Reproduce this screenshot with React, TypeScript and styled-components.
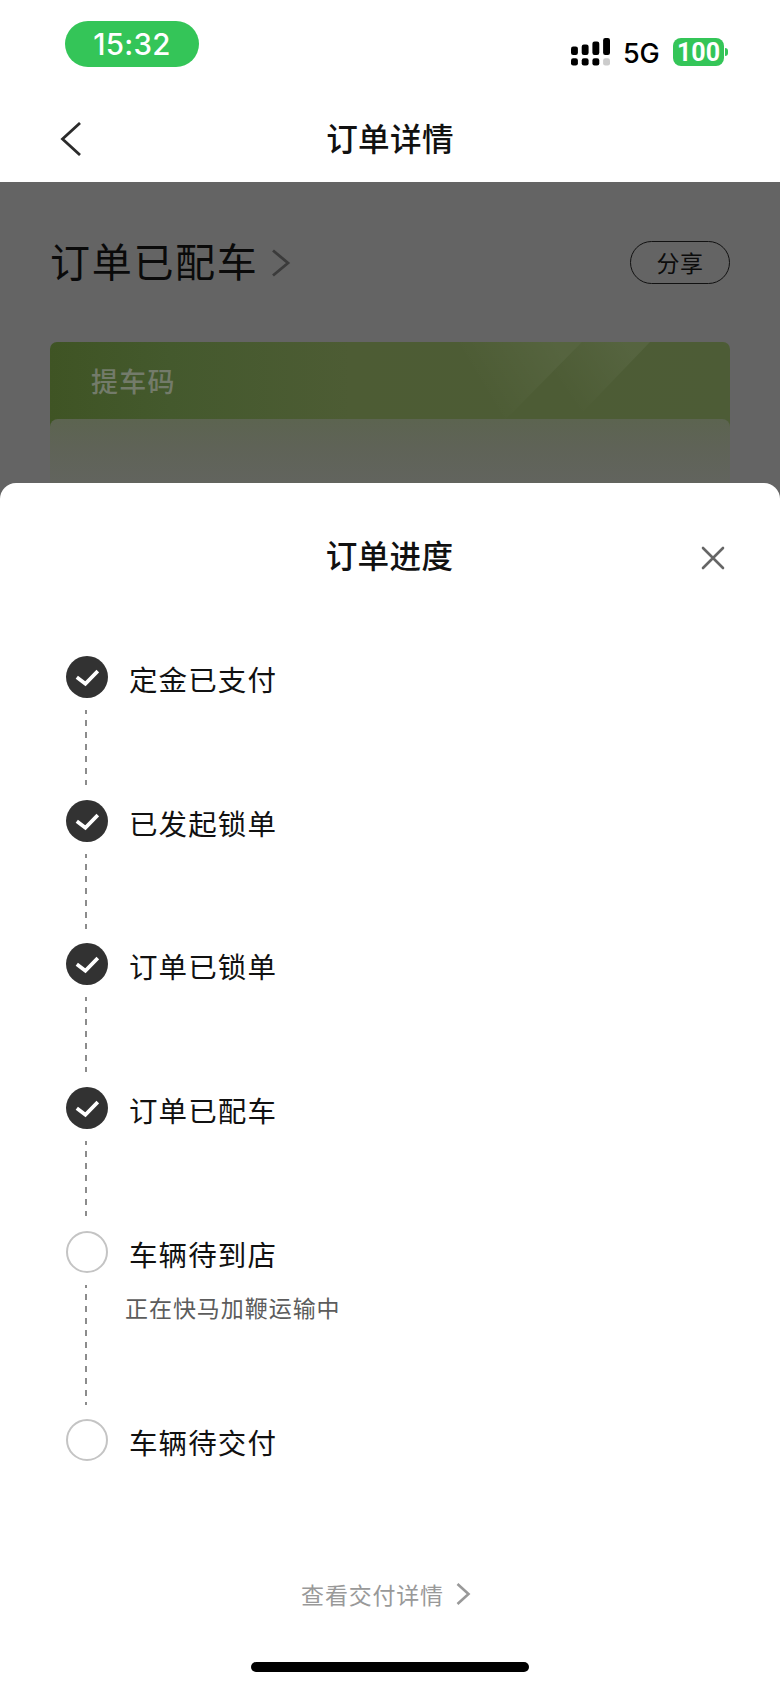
import React from 'react';
import styled, { createGlobalStyle } from 'styled-components';

const GlobalStyle = createGlobalStyle`
  * { box-sizing: border-box; }
  body {
    margin: 0;
    background: #fff;
    font-family: "Noto Sans CJK SC", "Noto Sans", sans-serif;
    color: #111;
  }
`;

const Screen = styled.div`
  position: relative;
  width: 780px;
  height: 1688px;
  overflow: hidden;
  display: flex;
  flex-direction: column;
  background: #fff;
`;

const StatusBar = styled.header`
  height: 92px;
  flex: none;
  display: flex;
  justify-content: space-between;
  align-items: flex-start;
  padding: 21px 52px 0 65px;
  font-family: Inter, "Noto Sans", sans-serif;
`;

const TimePill = styled.div`
  width: 134px;
  height: 46px;
  border-radius: 23px;
  background: #34c558;
  color: #fff;
  font-size: 29.5px;
  font-weight: 500;
  line-height: 47px;
  text-align: center;
  letter-spacing: 0.3px;
`;

const StatusIcons = styled.div`
  display: flex;
  align-items: center;
  height: 28px;
  margin-top: 17px;
`;

const Network = styled.span`
  width: 38px;
  margin: 3px 0 0 13px;
  font-size: 27px;
  font-weight: 500;
  line-height: 28px;
  letter-spacing: -0.3px;
  color: #000;
`;

const Battery = styled.div`
  width: 51px;
  height: 28px;
  margin-left: 12px;
  border-radius: 8px;
  background: #34c558;
  color: #fff;
  font-family: Roboto, Inter, sans-serif;
  font-size: 25px;
  font-weight: 700;
  line-height: 29px;
  text-align: center;
`;

const BatteryTip = styled.div`
  width: 3px;
  height: 8px;
  margin-left: 1px;
  border-radius: 0 3px 3px 0;
  background: #34c558;
`;

const NavBar = styled.nav`
  height: 90px;
  flex: none;
  display: grid;
  grid-template-columns: 100px 1fr 100px;
  align-items: center;
`;

const BackButton = styled.button`
  border: 0;
  background: none;
  padding: 5px 0 0 60px;
  height: 40px;
  display: flex;
  justify-content: flex-start;
`;

const Title = styled.h1`
  margin: 0;
  font-size: 31.6px;
  font-weight: 500;
  line-height: 48px;
  text-align: center;
  letter-spacing: 0.3px;
`;

const OrderPage = styled.main`
  flex: 1;
  background: #646464;
  padding: 56px 50px 0;
`;

const OrderHead = styled.div`
  display: flex;
  align-items: center;
  justify-content: space-between;
  height: 48px;
`;

const OrderStatus = styled.h2`
  margin: -4px 0 0;
  display: flex;
  align-items: center;
  gap: 12px;
  font-size: 40px;
  font-weight: 400;
  line-height: 48px;
  letter-spacing: 1.7px;
  color: #0a0a0a;

  svg {
    margin-top: 5px;
  }
`;

const ShareButton = styled.button`
  width: 100px;
  height: 43px;
  margin-top: 1px;
  padding: 0 0 2px;
  border: 1.5px solid #111;
  border-radius: 22px;
  background: none;
  color: #0c0c0c;
  font-family: inherit;
  font-size: 23px;
  line-height: 36px;
  letter-spacing: 0.5px;
`;

const CodeCard = styled.section`
  position: relative;
  margin-top: 56px;
  height: 300px;
  border-radius: 7px;
  overflow: hidden;
  background: linear-gradient(90deg, #3f5424 0, #44592d 120px, #4d5c34 300px, #4d5c36 100%);
`;

const CardShine = styled.svg`
  position: absolute;
  top: 0;
  right: 80px;
`;

const CodeTitle = styled.div`
  height: 77px;
  padding: 0 41px;
  font-size: 27px;
  font-weight: 500;
  line-height: 77px;
  letter-spacing: 1.2px;
  color: #737b6a;
`;

const CodeBody = styled.div`
  position: relative;
  height: 230px;
  border-radius: 8px 8px 0 0;
  background: linear-gradient(#5c6450 0, #5f6357 28px, #62645e 64px, #646464 100px);
`;

const Sheet = styled.section`
  position: absolute;
  top: 483px;
  left: 0;
  right: 0;
  bottom: 0;
  display: flex;
  flex-direction: column;
  align-items: center;
  background: #fff;
  border-radius: 16px 16px 0 0;
`;

const SheetHead = styled.div`
  width: 100%;
  height: 173px;
  flex: none;
  display: grid;
  grid-template-columns: 100px 1fr 100px;
  align-items: start;
  padding-top: 47px;
`;

const SheetTitle = styled(Title).attrs({ as: 'h2' })`
  grid-column: 2;
  padding-right: 1px;
`;

const CloseButton = styled.button`
  border: 0;
  background: none;
  padding: 0;
  margin: 16px 0 0 21px;
  width: 24px;
  height: 24px;
  display: flex;
`;

const Steps = styled.ol`
  list-style: none;
  margin: 0;
  padding: 0 66px;
  width: 100%;
`;

const Step = styled.li<{ $height: number }>`
  display: flex;
  gap: 21px;
  height: ${(p) => p.$height}px;
`;

const Rail = styled.div`
  width: 42px;
  display: flex;
  flex-direction: column;
  align-items: center;
`;

const Marker = styled.div<{ $done: boolean }>`
  width: 42px;
  height: 42px;
  flex: none;
  display: flex;
  align-items: center;
  justify-content: center;
  border-radius: 50%;
  border: ${(p) => (p.$done ? 'none' : '2px solid #c4c4c4')};
  background: ${(p) => (p.$done ? '#323232' : '#fff')};
`;

const Dashes = styled.svg`
  width: 2px;
  margin: 12px 2px 0 0;
  display: block;
`;

const StepText = styled.div`
  padding-top: 1px;
`;

const StepName = styled.div`
  font-size: 28.5px;
  line-height: 44px;
  letter-spacing: 1.1px;
`;

const StepNote = styled.div`
  margin: 14px 0 0 -4px;
  font-size: 23px;
  line-height: 34px;
  letter-spacing: 0.95px;
  color: #5c5c5c;
`;

const DetailLink = styled.a`
  margin: 116px 7px 0 0;
  display: flex;
  align-items: center;
  gap: 12px;
  font-size: 23px;
  line-height: 34px;
  letter-spacing: 0.8px;
  color: #999;
`;

const HomeIndicator = styled.div`
  width: 278px;
  height: 10px;
  margin: auto 0 16px;
  border-radius: 5px;
  background: #000;
`;

const bars = [
  { x: 0, y: 8.5 },
  { x: 10.7, y: 6.5 },
  { x: 21.4, y: 3.5 },
  { x: 32.1, y: 0 },
];

const Signal = () => (
  <svg width="39" height="28" viewBox="0 0 39 28">
    {bars.map((b, i) => (
      <g key={b.x}>
        <rect x={b.x} y={b.y} width="6.9" height={17 - b.y} rx="2.2" fill="#000" />
        <rect x={b.x} y="20.3" width="6.9" height="7.2" rx="2.2" fill={i === 3 ? '#ccc' : '#000'} />
      </g>
    ))}
  </svg>
);

const steps = [
  { name: '定金已支付', done: true, height: 144, line: 75, offset: 2 },
  { name: '已发起锁单', done: true, height: 143, line: 75, offset: 2 },
  { name: '订单已锁单', done: true, height: 144, line: 75, offset: 2 },
  { name: '订单已配车', done: true, height: 144, line: 75, offset: 2 },
  { name: '车辆待到店', done: false, height: 188, line: 120, offset: 3, note: '正在快马加鞭运输中' },
  { name: '车辆待交付', done: false, height: 42, line: 0, offset: 0 },
];

export default function App() {
  return (
    <Screen>
      <GlobalStyle />
      <StatusBar>
        <TimePill>15:32</TimePill>
        <StatusIcons>
          <Signal />
          <Network>5G</Network>
          <Battery>100</Battery>
          <BatteryTip />
        </StatusIcons>
      </StatusBar>
      <NavBar>
        <BackButton aria-label="返回">
          <svg width="22" height="34" viewBox="0 0 22 34" fill="none">
            <path d="M20 1 L2.5 17 L20 33" stroke="#2b2b2b" strokeWidth="2.8" />
          </svg>
        </BackButton>
        <Title>订单详情</Title>
      </NavBar>
      <OrderPage>
        <OrderHead>
          <OrderStatus>
            订单已配车
            <svg width="20" height="28" viewBox="0 0 20 28" fill="none">
              <path d="M2 1.5 L17 14 L2 26.5" stroke="#3b3b3b" strokeWidth="2.8" />
            </svg>
          </OrderStatus>
          <ShareButton>分享</ShareButton>
        </OrderHead>
        <CodeCard>
          <CardShine width="280" height="78" viewBox="0 0 280 78">
            <defs>
              <linearGradient id="shineLeft" gradientUnits="userSpaceOnUse" x1="185" y1="0" x2="110" y2="45">
                <stop offset="0" stopColor="#fff" stopOpacity="0.05" />
                <stop offset="1" stopColor="#fff" stopOpacity="0" />
              </linearGradient>
              <linearGradient id="shineRight" gradientUnits="userSpaceOnUse" x1="255" y1="0" x2="190" y2="45">
                <stop offset="0" stopColor="#fff" stopOpacity="0.05" />
                <stop offset="1" stopColor="#fff" stopOpacity="0" />
              </linearGradient>
            </defs>
            <path d="M60 0 H212 L135 78 H20 Z" fill="url(#shineLeft)" />
            <path d="M212 0 H280 L205 78 H135 Z" fill="url(#shineRight)" />
          </CardShine>
          <CodeTitle>提车码</CodeTitle>
          <CodeBody />
        </CodeCard>
      </OrderPage>
      <Sheet>
        <SheetHead>
          <SheetTitle>订单进度</SheetTitle>
          <CloseButton aria-label="关闭">
            <svg width="24" height="24" viewBox="0 0 24 24" fill="none">
              <path d="M2 2 L22 22 M22 2 L2 22" stroke="#666" strokeWidth="2.6" strokeLinecap="round" />
            </svg>
          </CloseButton>
        </SheetHead>
        <Steps>
          {steps.map((s) => (
            <Step key={s.name} $height={s.height}>
              <Rail>
                <Marker $done={s.done}>
                  {s.done && (
                    <svg width="24" height="20" viewBox="0 0 24 20" fill="none">
                      <path d="M1.8 10.2 L10.4 16.8 L22.8 4" stroke="#fff" strokeWidth="3.7" />
                    </svg>
                  )}
                </Marker>
                {s.line > 0 && (
                  <Dashes height={s.line} viewBox={`0 0 2 ${s.line}`}>
                    <line
                      x1="1"
                      y1="0"
                      x2="1"
                      y2={s.line}
                      stroke="#8c8c8c"
                      strokeWidth="2"
                      strokeDasharray="6 6"
                      strokeDashoffset={s.offset}
                    />
                  </Dashes>
                )}
              </Rail>
              <StepText>
                <StepName>{s.name}</StepName>
                {s.note && <StepNote>{s.note}</StepNote>}
              </StepText>
            </Step>
          ))}
        </Steps>
        <DetailLink>
          查看交付详情
          <svg width="16" height="24" viewBox="0 0 16 24" fill="none">
            <path d="M1.5 2 L12.5 12 L1.5 22" stroke="#999" strokeWidth="2.6" />
          </svg>
        </DetailLink>
        <HomeIndicator />
      </Sheet>
    </Screen>
  );
}
